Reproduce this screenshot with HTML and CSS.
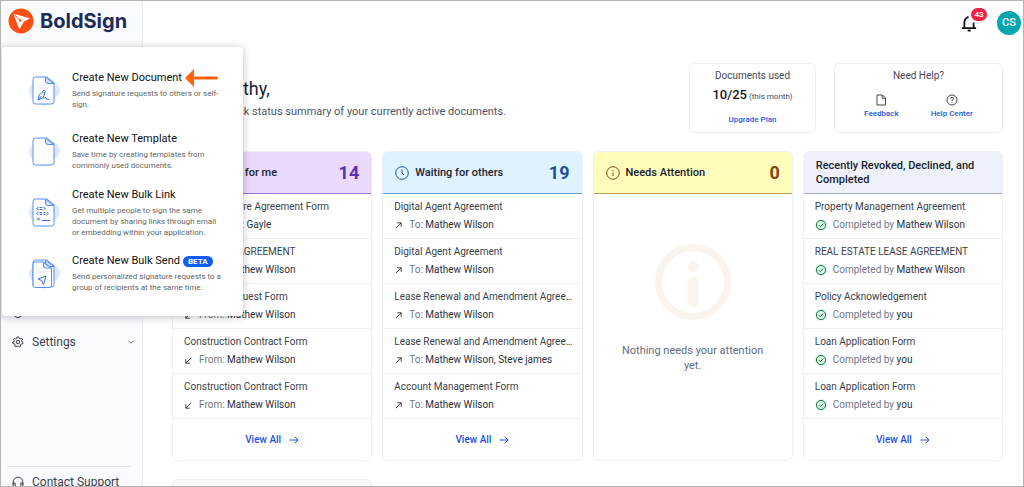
FILE: index.html
```html
<!DOCTYPE html>
<html lang="en">
<head>
<meta charset="utf-8">
<title>BoldSign Dashboard</title>
<link rel="stylesheet" href="styles.css">
</head>
<body>
<svg class="defs" aria-hidden="true">
  <symbol id="up" viewBox="0 0 10 10"><path d="M2 8 8 2M3.500 2H8v4.500"/></symbol>
  <symbol id="down" viewBox="0 0 10 10"><path d="M8 2 2 8M2 3.500V8h4.500"/></symbol>
  <symbol id="next" viewBox="0 0 10 8"><path d="M.5 4h8.500M5.800.8 9 4 5.800 7.200"/></symbol>
  <symbol id="done" viewBox="0 0 12 12"><circle class="halo" cx="6" cy="6" r="6"/><circle cx="6" cy="6" r="4.600"/><path d="m4 6.200 1.400 1.400L8.200 4.700"/></symbol>
  <symbol id="sheet" viewBox="0 0 32 32"><path class="blob" d="M1 16C1 12 4 9 7 7l8-5q2-1 4 0l8 5q5 4 5 8t-5 8l-8 7q-2 1-5 0l-7-5q-6-4-6-9z"/><path class="paper" d="M7.500 2h11.500l7 6v18.500q0 2.500-2.500 2.500H7.500Q5 29 5 26.500v-22Q5 2 7.500 2z"/><path class="fold" d="M17.500 2.500v3.500q0 2.500 2.500 2.500h6z"/></symbol>
</svg>
<div class="app">
  <aside class="sidebar">
    <a class="brand" href="#">
      <svg class="brand-mark" viewBox="0 0 26 26" aria-hidden="true"><circle cx="13" cy="13" r="12.500" fill="#ff4e12"/><path d="M5.800 5.800 21 9.900q.9.300.1.900l-5.300 3-4 7q-.5.700-.8-.2L5.500 6.300q-.2-.6.300-.5z" fill="#fff"/><path d="m6 6.300 6 6" stroke="#ff4e12" stroke-width="1"/><circle cx="12.300" cy="12.500" r="1.300" fill="#ff4e12"/></svg>
      <span>BoldSign</span>
    </a>
    <nav class="nav">
      <a class="nav-item" href="#" aria-label="Team"><svg class="icon nav-icon" viewBox="0 0 12 12"><circle cx="6" cy="6" r="4.500"/></svg></a>
      <a class="nav-item" href="#"><svg class="icon nav-icon" viewBox="0 0 24 24"><path stroke-width="2" d="m10 2-.6 3-2 .9L5 4.400 3 7l1.600 2.300-.5 1.700L1.500 12l.6 3.200 2.900.4 1.200 1.700-.9 2.700L8 21.800l2.200-1.700h2.200L14.500 22l2.900-1.400-.5-2.900 1.200-1.600 3-.2.900-3.200-2.600-1.400-.2-2L21 7l-2-2.700-2.600 1.300-2-.8L13.500 2z"/><circle stroke-width="2" cx="12" cy="12" r="3.500"/></svg><span>Settings</span><svg class="icon chev" viewBox="0 0 8 8"><path d="m1.500 2.800 2.500 2.500 2.500-2.500"/></svg></a>
    </nav>
    <div class="support">
      <a class="nav-item" href="#"><svg class="icon nav-icon" viewBox="0 0 12 12"><path d="M1.200 9V6a4.800 4.800 0 0 1 9.600 0v3M1.200 7h2v4h-1q-1 0-1-1zM10.800 7h-2v4h1q1 0 1-1z"/></svg><span>Contact Support</span></a>
    </div>
  </aside>

  <div class="page">
    <header class="topbar">
      <button class="bell" aria-label="Notifications"><svg class="icon bell-icon" viewBox="0 0 18 20"><path d="M1 15.800h16M3.800 16V9.500q0-4.500 3.700-5.700L8 2.500M14.200 9.500V16"/><path d="M7.500 18.500h3.500" stroke-width="2"/></svg><span class="count">43</span></button>
      <button class="avatar">CS</button>
    </header>
    <main class="main">
      <section class="intro">
        <div class="greeting">
          <h1>Hello, Cathy,</h1>
          <p>Here’s the quick status summary of your currently active documents.</p>
        </div>
        <div class="panel usage">
          <h2>Documents used</h2>
          <p><strong>10/25</strong> (this month)</p>
          <a href="#">Upgrade Plan</a>
        </div>
        <div class="panel help">
          <h2>Need Help?</h2>
          <div class="help-links">
            <a href="#"><svg class="icon help-icon" viewBox="0 0 12 12"><path d="M2 1h5.500L10.500 4v7H2zM7.200 1v3.200h3.300"/></svg>Feedback</a>
            <a href="#"><svg class="icon help-icon" viewBox="0 0 12 12"><circle cx="6" cy="6" r="5"/><path d="M4.500 4.900Q4.600 3.400 6 3.400q1.500 0 1.500 1.300Q7.500 5.500 6 6.300V7M6 8.200v.9"/></svg>Help Center</a>
          </div>
        </div>
      </section>

      <section class="cards">
        <article class="card mine">
          <header><svg class="icon head-icon" viewBox="0 0 14 14"><circle cx="7" cy="7" r="6.300"/><path d="M7 3.500V7l2 2"/></svg><h3>Waiting for me</h3><b>14</b></header>
          <ul>
            <li><a href="#">Non-Disclosure Agreement Form</a><p><svg class="icon dir"><use href="#down"/></svg>On behalf: <em>Gayle</em></p></li>
            <li><a href="#">PURCHASE AGREEMENT</a><p><svg class="icon dir"><use href="#down"/></svg>From: <em>Mathew Wilson</em></p></li>
            <li><a href="#">Vacation Request Form</a><p><svg class="icon dir"><use href="#down"/></svg>From: <em>Mathew Wilson</em></p></li>
            <li><a href="#">Construction Contract Form</a><p><svg class="icon dir"><use href="#down"/></svg>From: <em>Mathew Wilson</em></p></li>
            <li><a href="#">Construction Contract Form</a><p><svg class="icon dir"><use href="#down"/></svg>From: <em>Mathew Wilson</em></p></li>
          </ul>
          <a class="view-all" href="#">View All <svg class="icon next"><use href="#next"/></svg></a>
        </article>
        <article class="card others">
          <header><svg class="icon head-icon" viewBox="0 0 14 14"><circle cx="7" cy="7" r="6.300"/><path d="M7 3.500V7l2 2"/></svg><h3>Waiting for others</h3><b>19</b></header>
          <ul>
            <li><a href="#">Digital Agent Agreement</a><p><svg class="icon dir"><use href="#up"/></svg>To: <em>Mathew Wilson</em></p></li>
            <li><a href="#">Digital Agent Agreement</a><p><svg class="icon dir"><use href="#up"/></svg>To: <em>Mathew Wilson</em></p></li>
            <li><a href="#">Lease Renewal and Amendment Agree…</a><p><svg class="icon dir"><use href="#up"/></svg>To: <em>Mathew Wilson</em></p></li>
            <li><a href="#">Lease Renewal and Amendment Agree…</a><p><svg class="icon dir"><use href="#up"/></svg>To: <em>Mathew Wilson, Steve james</em></p></li>
            <li><a href="#">Account Management Form</a><p><svg class="icon dir"><use href="#up"/></svg>To: <em>Mathew Wilson</em></p></li>
          </ul>
          <a class="view-all" href="#">View All <svg class="icon next"><use href="#next"/></svg></a>
        </article>
        <article class="card attention">
          <header><svg class="icon head-icon" viewBox="0 0 14 14"><circle cx="7" cy="7" r="6.300"/><path d="M7 6.500V10M7 4v1.200"/></svg><h3>Needs Attention</h3><b>0</b></header>
          <div class="empty">
            <svg class="empty-icon" viewBox="0 0 76 76"><circle cx="38" cy="38" r="34.500"/><path d="M38 38v20"/><path d="M38 22.500v.01"/></svg>
            <p>Nothing needs your attention yet.</p>
          </div>
        </article>
        <article class="card recent">
          <header><h3>Recently Revoked, Declined, and Completed</h3></header>
          <ul>
            <li><a href="#">Property Management Agreement</a><p><svg class="icon done"><use href="#done"/></svg>Completed by <em>Mathew Wilson</em></p></li>
            <li><a href="#">REAL ESTATE LEASE AGREEMENT</a><p><svg class="icon done"><use href="#done"/></svg>Completed by <em>Mathew Wilson</em></p></li>
            <li><a href="#">Policy Acknowledgement</a><p><svg class="icon done"><use href="#done"/></svg>Completed by <em>you</em></p></li>
            <li><a href="#">Loan Application Form</a><p><svg class="icon done"><use href="#done"/></svg>Completed by <em>you</em></p></li>
            <li><a href="#">Loan Application Form</a><p><svg class="icon done"><use href="#done"/></svg>Completed by <em>you</em></p></li>
          </ul>
          <a class="view-all" href="#">View All <svg class="icon next"><use href="#next"/></svg></a>
        </article>
        <article class="card following"></article>
      </section>
    </main>
  </div>

  <div class="menu">
    <button class="menu-item">
      <svg class="doc" viewBox="0 0 32 32"><use href="#sheet"/><path class="faint" d="M9 10h8M9 13h12"/><path class="ink" d="m10 25 1-5 4-3.500 1.500 1.500-1 4.500zM10 25l3.500-4M14.500 16.500l1.500-1.500 1.500 1.500-1 1.500M15.500 24q2-3 2.500-1 0 2 2 1l1.500 1"/></svg>
      <span class="copy"><span class="title">Create New Document <svg class="pointer" viewBox="0 0 33 18" aria-hidden="true"><path d="M0 9 9 0v7.500h22.500a1.500 1.500 0 0 1 0 3H9V18z" fill="#ff620d"/></svg></span><span class="desc">Send signature requests to others or self-sign.</span></span>
    </button>
    <button class="menu-item">
      <svg class="doc" viewBox="0 0 32 32"><use href="#sheet"/></svg>
      <span class="copy"><span class="title">Create New Template</span><span class="desc">Save time by creating templates from commonly used documents.</span></span>
    </button>
    <button class="menu-item">
      <svg class="doc" viewBox="0 0 32 32"><use href="#sheet"/><path class="ink" d="m10.500 10-2 1.500 2 1.500M15.500 10l2 1.500-2 1.500M11.500 10.500h3M11.500 12.500h3M10.500 15l-2 1.500 2 1.500M18.500 15l2 1.500-2 1.500M11.500 15.500H14M11.500 17.500H14M15.500 15.500h2M15.500 17.500h2M9 20.500l3 3M12 20.500l-3 3M14 23.500h8"/></svg>
      <span class="copy"><span class="title">Create New Bulk Link</span><span class="desc">Get multiple people to sign the same document by sharing links through email or embedding within your application.</span></span>
    </button>
    <button class="menu-item">
      <svg class="doc" viewBox="0 0 32 32"><use href="#sheet"/><path class="paper" d="M7 4h8.500l8 6v17q0 2.500-2.500 2.500H7.500Q5 29.500 5 27V6q0-2 2-2z"/><path class="fold" d="M15.500 4.500v3.500q0 2 2 2h6z"/><path class="faint" d="M8 11h5M8 14h12"/><path class="ink" d="m10 21 8-3-2.500 8.500-2-4z"/></svg>
      <span class="copy"><span class="title">Create New Bulk Send <span class="beta">BETA</span></span><span class="desc">Send personalized signature requests to a group of recipients at the same time.</span></span>
    </button>
  </div>
</div>
</body>
</html>
```
FILE: styles.css
```css
* { box-sizing: border-box; }
body { margin: 0; font-family: Roboto, "Liberation Sans", sans-serif; font-size: 10px; line-height: 14px; color: #3a3f4a; background: #fff; }
h1, h2, h3, p, ul { margin: 0; padding: 0; font-weight: 400; }
ul { list-style: none; }
a { color: inherit; text-decoration: none; }
button { font: inherit; color: inherit; background: none; border: 0; padding: 0; text-align: left; }
em { font-style: normal; color: #2b303b; }
.defs { display: none; }
.icon { fill: none; stroke: currentColor; stroke-width: 1; flex: none; }

.app { position: relative; display: flex; height: 100vh; overflow: hidden; border: 1px solid #b5b5b5; }
.sidebar { flex: none; width: 142px; background: #f9fafd; border-right: 1px solid #eceef4; }
.brand { display: flex; align-items: center; gap: 6px; height: 40px; padding-left: 7px; font: 700 20px/24px Inter, sans-serif; color: #1d2b59; }
.brand-mark { width: 26px; height: 26px; }
.nav { height: 425px; padding-top: 257px; }
.nav-item { display: flex; align-items: center; gap: 8px; height: 29px; padding: 0 7px 0 11px; font-size: 12px; }
.nav-icon { width: 12px; height: 12px; }
.chev { width: 8px; height: 8px; margin-left: auto; color: #777; }
.support { margin: 0 11px 0 6px; border-top: 1px solid #e3e5ea; }
.support .nav-item { padding: 0 0 0 5px; }

.page { flex: 1; min-width: 0; }
.topbar { display: flex; justify-content: flex-end; align-items: center; gap: 20px; height: 44px; padding-right: 2px; }
.bell { position: relative; width: 16px; height: 18px; color: #111; }
.bell-icon { display: block; width: 16px; height: 18px; stroke-width: 2; }
.count { position: absolute; left: 10px; top: -6px; width: 16px; border-radius: 7px; background: #fb1c42; color: #fff; font-size: 8px; line-height: 13px; font-weight: 700; text-align: center; box-shadow: 0 0 0 1px #fff; }
.avatar { width: 24px; height: 24px; border-radius: 50%; background: #00a5ae; color: #fff; font-size: 11px; font-weight: 500; text-align: center; }

.main { padding: 18px 20px 0 29px; }
.intro { display: flex; gap: 18px; height: 70px; }
.greeting { flex: 1; padding-top: 15px; }
.greeting h1 { font-size: 18px; line-height: 22px; color: #1b1f29; }
.greeting p { margin-top: 5px; font-size: 11px; color: #4e5567; }
.panel { padding: 5px 0; border: 1px solid #ebeef5; border-radius: 6px; text-align: center; color: #434956; }
.panel h2 { font-size: 10px; line-height: 14px; }
.panel a { font-size: 8px; font-weight: 500; color: #1c58e8; }
.usage { width: 127px; }
.usage p { margin: 5px 0 8px; font-size: 8px; }
.usage strong { font-size: 13px; font-weight: 500; color: #16181d; }
.help { width: 169px; }
.help-links { display: flex; justify-content: center; gap: 32px; margin-top: 11px; }
.help-links a { display: flex; flex-direction: column; align-items: center; gap: 1px; }
.help-icon { width: 12px; height: 12px; color: #444; }

.cards { display: grid; grid-template-columns: repeat(4, minmax(0, 1fr)); gap: 18px 10px; margin-top: 18px; }
.card { overflow: hidden; border: 1px solid #eef0f5; border-radius: 6px; }
.card header { display: flex; align-items: center; gap: 6px; height: 42px; padding: 0 12px; border-bottom: 1px solid; }
.card h3 { flex: 1; font-size: 11px; font-weight: 500; color: #20242e; }
.card b { font-size: 18px; font-weight: 700; }
.head-icon { width: 14px; height: 14px; }
.mine header { background: #e9d9fd; color: #5a31b5; border-color: #9873dc; }
.others header { background: #dff2ff; color: #1d51a0; border-color: #6ba0d5; }
.attention header { background: #fefbbb; color: #85450d; border-color: #c39a50; }
.recent header { background: #eef1f9; border-color: #a2a9b8; }
.card li { height: 45px; padding: 6px 11px 5px; border-bottom: 1px solid #edeff4; }
.card li a { display: block; white-space: nowrap; }
.card li p { display: flex; align-items: center; margin-top: 4px; color: #717684; white-space: pre; }
.dir { width: 9px; height: 9px; margin-right: 6px; color: #333; }
.done { width: 12px; height: 12px; margin-right: 6px; color: #1a7440; }
.halo { fill: #d9f5e5; stroke: none; }
.view-all { display: flex; justify-content: center; align-items: center; gap: 8px; height: 41px; color: #1c50e5; font-weight: 500; }
.next { width: 10px; height: 8px; }
.empty { display: flex; flex-direction: column; align-items: center; padding: 50px 24px 0; font-size: 11px; line-height: 15px; text-align: center; color: #646b82; }
.empty-icon { width: 76px; height: 76px; margin-bottom: 23px; fill: none; stroke: #faf4ee; stroke-width: 7; stroke-linecap: round; }
.empty-icon path { stroke-width: 11; }
.following { height: 60px; background: #f5f7fa; }

.menu { position: absolute; left: 1px; top: 46px; width: 241px; padding: 13px 18px 12px 26px; background: #fff; border-radius: 4px; box-shadow: 0 1px 8px rgba(0, 0, 0, .25); }
.menu-item { display: flex; align-items: center; gap: 12px; width: 100%; height: 61px; }
.doc { flex: none; width: 32px; height: 32px; fill: none; }
.copy { display: flex; flex: 1; flex-direction: column; gap: 3px; }
.title { display: flex; align-items: center; gap: 3px; font-size: 11px; line-height: 14px; color: #111; white-space: nowrap; }
.desc { font-size: 8px; line-height: 11px; color: #666; }
.pointer { width: 33px; height: 18px; margin: -2px 0; }
.beta { padding: 0 5px; border-radius: 6px; background: #0b5cff; color: #fff; font-size: 8px; font-weight: 700; line-height: 11px; }
.blob { fill: #dee8fe; }
.paper { fill: #fff; stroke: #5590f6; stroke-width: 1; }
.fold { fill: #d4e3ff; stroke: #5590f6; stroke-width: 1; }
.ink { stroke: #3674ec; stroke-width: 1; }
.faint { stroke: #dce6f8; stroke-width: 1; }
```
